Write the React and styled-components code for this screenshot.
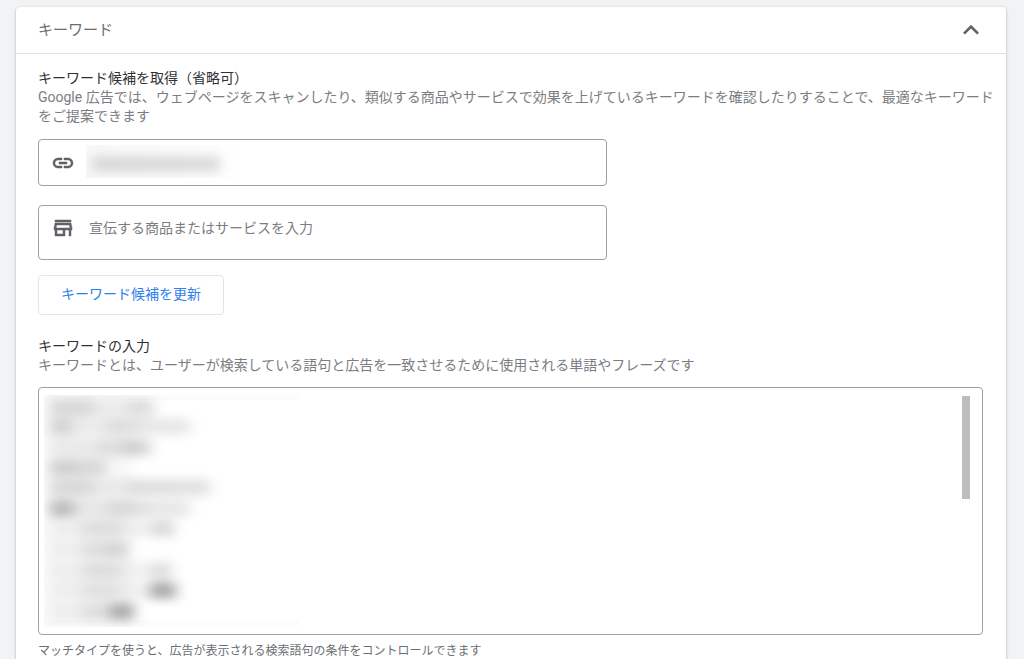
import { useState } from "react";
import styled, { createGlobalStyle } from "styled-components";
import { MdExpandLess, MdLink, MdOutlineStore } from "react-icons/md";

const GlobalStyle = createGlobalStyle`
  * {
    box-sizing: border-box;
  }

  body {
    margin: 0;
    background-color: #f1f3f4;
    font-family: Roboto, "Noto Sans CJK JP", sans-serif;
    font-size: 14px;
    line-height: 19px;
    color: #3c4043;
  }
`;

const Page = styled.main`
  padding: 7px 18px 0 16px;
`;

const Card = styled.section`
  background-color: white;
  border-radius: 4px 4px 0 0;
  box-shadow: 0 1px 3px rgba(60, 64, 67, 0.4);
`;

const CardHeader = styled.header`
  display: flex;
  align-items: center;
  justify-content: space-between;
  height: 47px;
  padding: 0 19px 0 22px;
  border-bottom: 1px solid #e0e0e0;
`;

const CardTitle = styled.h2`
  margin: 0;
  font-size: 15px;
  font-weight: 400;
  color: #6b6f74;
`;

const ToggleButton = styled.button`
  display: flex;
  padding: 0;
  border: none;
  background: none;
  color: #5f6368;
  cursor: pointer;

  svg {
    transform: ${(props) => (props.$open ? "none" : "rotate(180deg)")};
  }
`;

const CardBody = styled.div`
  padding: 15px 8px 0 22px;
`;

const Group = styled.div`
  display: flex;
  flex-direction: column;
  margin-bottom: ${(props) => (props.$last ? "0" : "22px")};
`;

const GroupTitle = styled.h3`
  margin: 0;
  font-size: 14px;
  font-weight: 400;
  color: #303134;
`;

const Description = styled.p`
  margin: 0 0 ${(props) => (props.$tight ? "12px" : "13px")};
  color: #7a7e83;
`;

const Field = styled.label`
  position: relative;
  display: flex;
  align-items: center;
  gap: 14px;
  width: 100%;
  max-width: 569px;
  height: ${(props) => (props.$tall ? "55px" : "47px")};
  margin-bottom: ${(props) => (props.$tall ? "15px" : "19px")};
  padding: 0 12px;
  padding-bottom: ${(props) => (props.$tall ? "9px" : "0")};
  border: 1px solid #9aa0a6;
  border-radius: 4px;
  color: #5f6368;

  > svg {
    flex-shrink: 0;
  }

  > svg > path:not([fill="none"]) {
    stroke: currentColor;
    stroke-width: 0.5;
  }
`;

const FieldInput = styled.input`
  flex: 1;
  min-width: 0;
  padding: 0;
  border: none;
  background: none;
  font: inherit;
  color: #3c4043;

  &:focus {
    outline: none;
  }

  &::placeholder {
    color: #7a7e83;
    opacity: 1;
  }
`;

const UpdateButton = styled.button`
  align-self: flex-start;
  height: 40px;
  padding: 0 22px 2px;
  border: 1px solid #e4e5e7;
  border-radius: 4px;
  background-color: white;
  font: inherit;
  color: #2f80ed;
  cursor: pointer;

  &:hover {
    background-color: #f8fbff;
  }
`;

const KeywordBox = styled.div`
  position: relative;
  height: 248px;
  margin-right: 15px;
  margin-bottom: 7px;
`;

const KeywordArea = styled.textarea`
  display: block;
  width: 100%;
  height: 100%;
  padding: 8px;
  border: 1px solid #9aa0a6;
  border-radius: 4px;
  background: none;
  font: inherit;
  color: #3c4043;
  resize: none;

  &:focus {
    outline: none;
  }
`;

const ScrollThumb = styled.div`
  position: absolute;
  top: 9px;
  right: 13px;
  width: 8px;
  height: 103px;
  background-color: #bdbdbd;
`;

const Mask = styled.svg`
  position: absolute;
  top: ${(props) => props.$top};
  left: ${(props) => props.$left};
  pointer-events: none;
`;

const Hint = styled.p`
  margin: 0;
  font-size: 12px;
  color: #6b6f74;
`;

// hidden keyword lines: [x, y, width, opacity]
const maskedKeywords = [
  [6, 13, 44, 0.12],
  [50, 13, 38, 0.05],
  [86, 13, 24, 0.13],
  [6, 32, 22, 0.15],
  [28, 32, 34, 0.05],
  [62, 32, 40, 0.1],
  [102, 32, 44, 0.09],
  [6, 53, 48, 0.06],
  [54, 53, 26, 0.1],
  [80, 53, 26, 0.17],
  [6, 73, 26, 0.16],
  [32, 73, 30, 0.13],
  [6, 93, 44, 0.12],
  [50, 93, 34, 0.06],
  [84, 93, 44, 0.12],
  [128, 93, 38, 0.11],
  [6, 114, 24, 0.24],
  [30, 114, 34, 0.07],
  [64, 114, 40, 0.12],
  [104, 114, 42, 0.09],
  [6, 134, 32, 0.04],
  [38, 134, 38, 0.1],
  [76, 134, 32, 0.06],
  [108, 134, 22, 0.14],
  [6, 155, 32, 0.04],
  [38, 155, 24, 0.1],
  [62, 155, 22, 0.14],
  [6, 176, 32, 0.04],
  [38, 176, 38, 0.1],
  [76, 176, 30, 0.05],
  [106, 176, 22, 0.12],
  [6, 196, 32, 0.04],
  [38, 196, 38, 0.09],
  [76, 196, 30, 0.05],
  [106, 196, 26, 0.32],
  [6, 217, 32, 0.04],
  [38, 217, 28, 0.1],
  [66, 217, 24, 0.3],
];

const MaskedUrl = () => (
  <Mask $top="5px" $left="47px" width="152" height="33" aria-hidden="true">
    <defs>
      <filter
        id="urlBlur"
        filterUnits="userSpaceOnUse"
        x="-20"
        y="-20"
        width="200"
        height="80"
      >
        <feGaussianBlur stdDeviation="6" />
      </filter>
      <linearGradient id="urlFade">
        <stop offset="0" stopColor="#f8f8f8" />
        <stop offset="1" stopColor="#fefefe" />
      </linearGradient>
    </defs>
    <rect width="152" height="33" fill="url(#urlFade)" />
    <g filter="url(#urlBlur)">
      <rect x="6" y="12" width="128" height="14" fill="#000" opacity="0.15" />
    </g>
  </Mask>
);

const MaskedKeywords = () => (
  <Mask $top="8px" $left="6px" width="255" height="232" aria-hidden="true">
    <defs>
      <filter
        id="keywordBlur"
        filterUnits="userSpaceOnUse"
        x="-20"
        y="-20"
        width="300"
        height="280"
      >
        <feGaussianBlur stdDeviation="7 5" />
      </filter>
    </defs>
    <rect width="255" height="5" fill="#fcfcfc" />
    <rect y="225" width="255" height="7" fill="#fcfcfc" />
    <g filter="url(#keywordBlur)">
      <rect x="0" y="0" width="88" height="230" fill="#000" opacity="0.03" />
      {maskedKeywords.map(([x, y, width, opacity]) => (
        <rect
          key={`${x}-${y}`}
          x={x}
          y={y - 9}
          width={width}
          height="17"
          fill="#000"
          opacity={opacity}
        />
      ))}
    </g>
  </Mask>
);

const App = () => {
  const [isOpen, setIsOpen] = useState(true);
  const [url, setUrl] = useState("");
  const [product, setProduct] = useState("");
  const [keywords, setKeywords] = useState("");

  return (
    <>
      <GlobalStyle />
      <Page>
        <Card>
          <CardHeader>
            <CardTitle>キーワード</CardTitle>
            <ToggleButton
              type="button"
              $open={isOpen}
              aria-expanded={isOpen}
              aria-label="キーワード"
              onClick={() => setIsOpen(!isOpen)}
            >
              <MdExpandLess size={32} />
            </ToggleButton>
          </CardHeader>
          {isOpen && (
            <CardBody>
              <Group>
                <GroupTitle>キーワード候補を取得（省略可）</GroupTitle>
                <Description>
                  Google
                  広告では、ウェブページをスキャンしたり、類似する商品やサービスで効果を上げているキーワードを確認したりすることで、最適なキーワードをご提案できます
                </Description>
                <Field>
                  <MdLink size={24} />
                  <FieldInput
                    type="url"
                    aria-label="URL"
                    value={url}
                    onChange={(e) => setUrl(e.target.value)}
                  />
                  {!url && <MaskedUrl />}
                </Field>
                <Field $tall>
                  <MdOutlineStore size={24} />
                  <FieldInput
                    type="text"
                    aria-label="宣伝する商品またはサービスを入力"
                    placeholder="宣伝する商品またはサービスを入力"
                    value={product}
                    onChange={(e) => setProduct(e.target.value)}
                  />
                </Field>
                <UpdateButton type="button">
                  キーワード候補を更新
                </UpdateButton>
              </Group>
              <Group $last>
                <GroupTitle as="label" htmlFor="keywords">
                  キーワードの入力
                </GroupTitle>
                <Description $tight>
                  キーワードとは、ユーザーが検索している語句と広告を一致させるために使用される単語やフレーズです
                </Description>
                <KeywordBox>
                  <KeywordArea
                    id="keywords"
                    value={keywords}
                    onChange={(e) => setKeywords(e.target.value)}
                  />
                  {!keywords && <MaskedKeywords />}
                  <ScrollThumb />
                </KeywordBox>
                <Hint>
                  マッチタイプを使うと、広告が表示される検索語句の条件をコントロールできます
                </Hint>
              </Group>
            </CardBody>
          )}
        </Card>
      </Page>
    </>
  );
};

export default App;
